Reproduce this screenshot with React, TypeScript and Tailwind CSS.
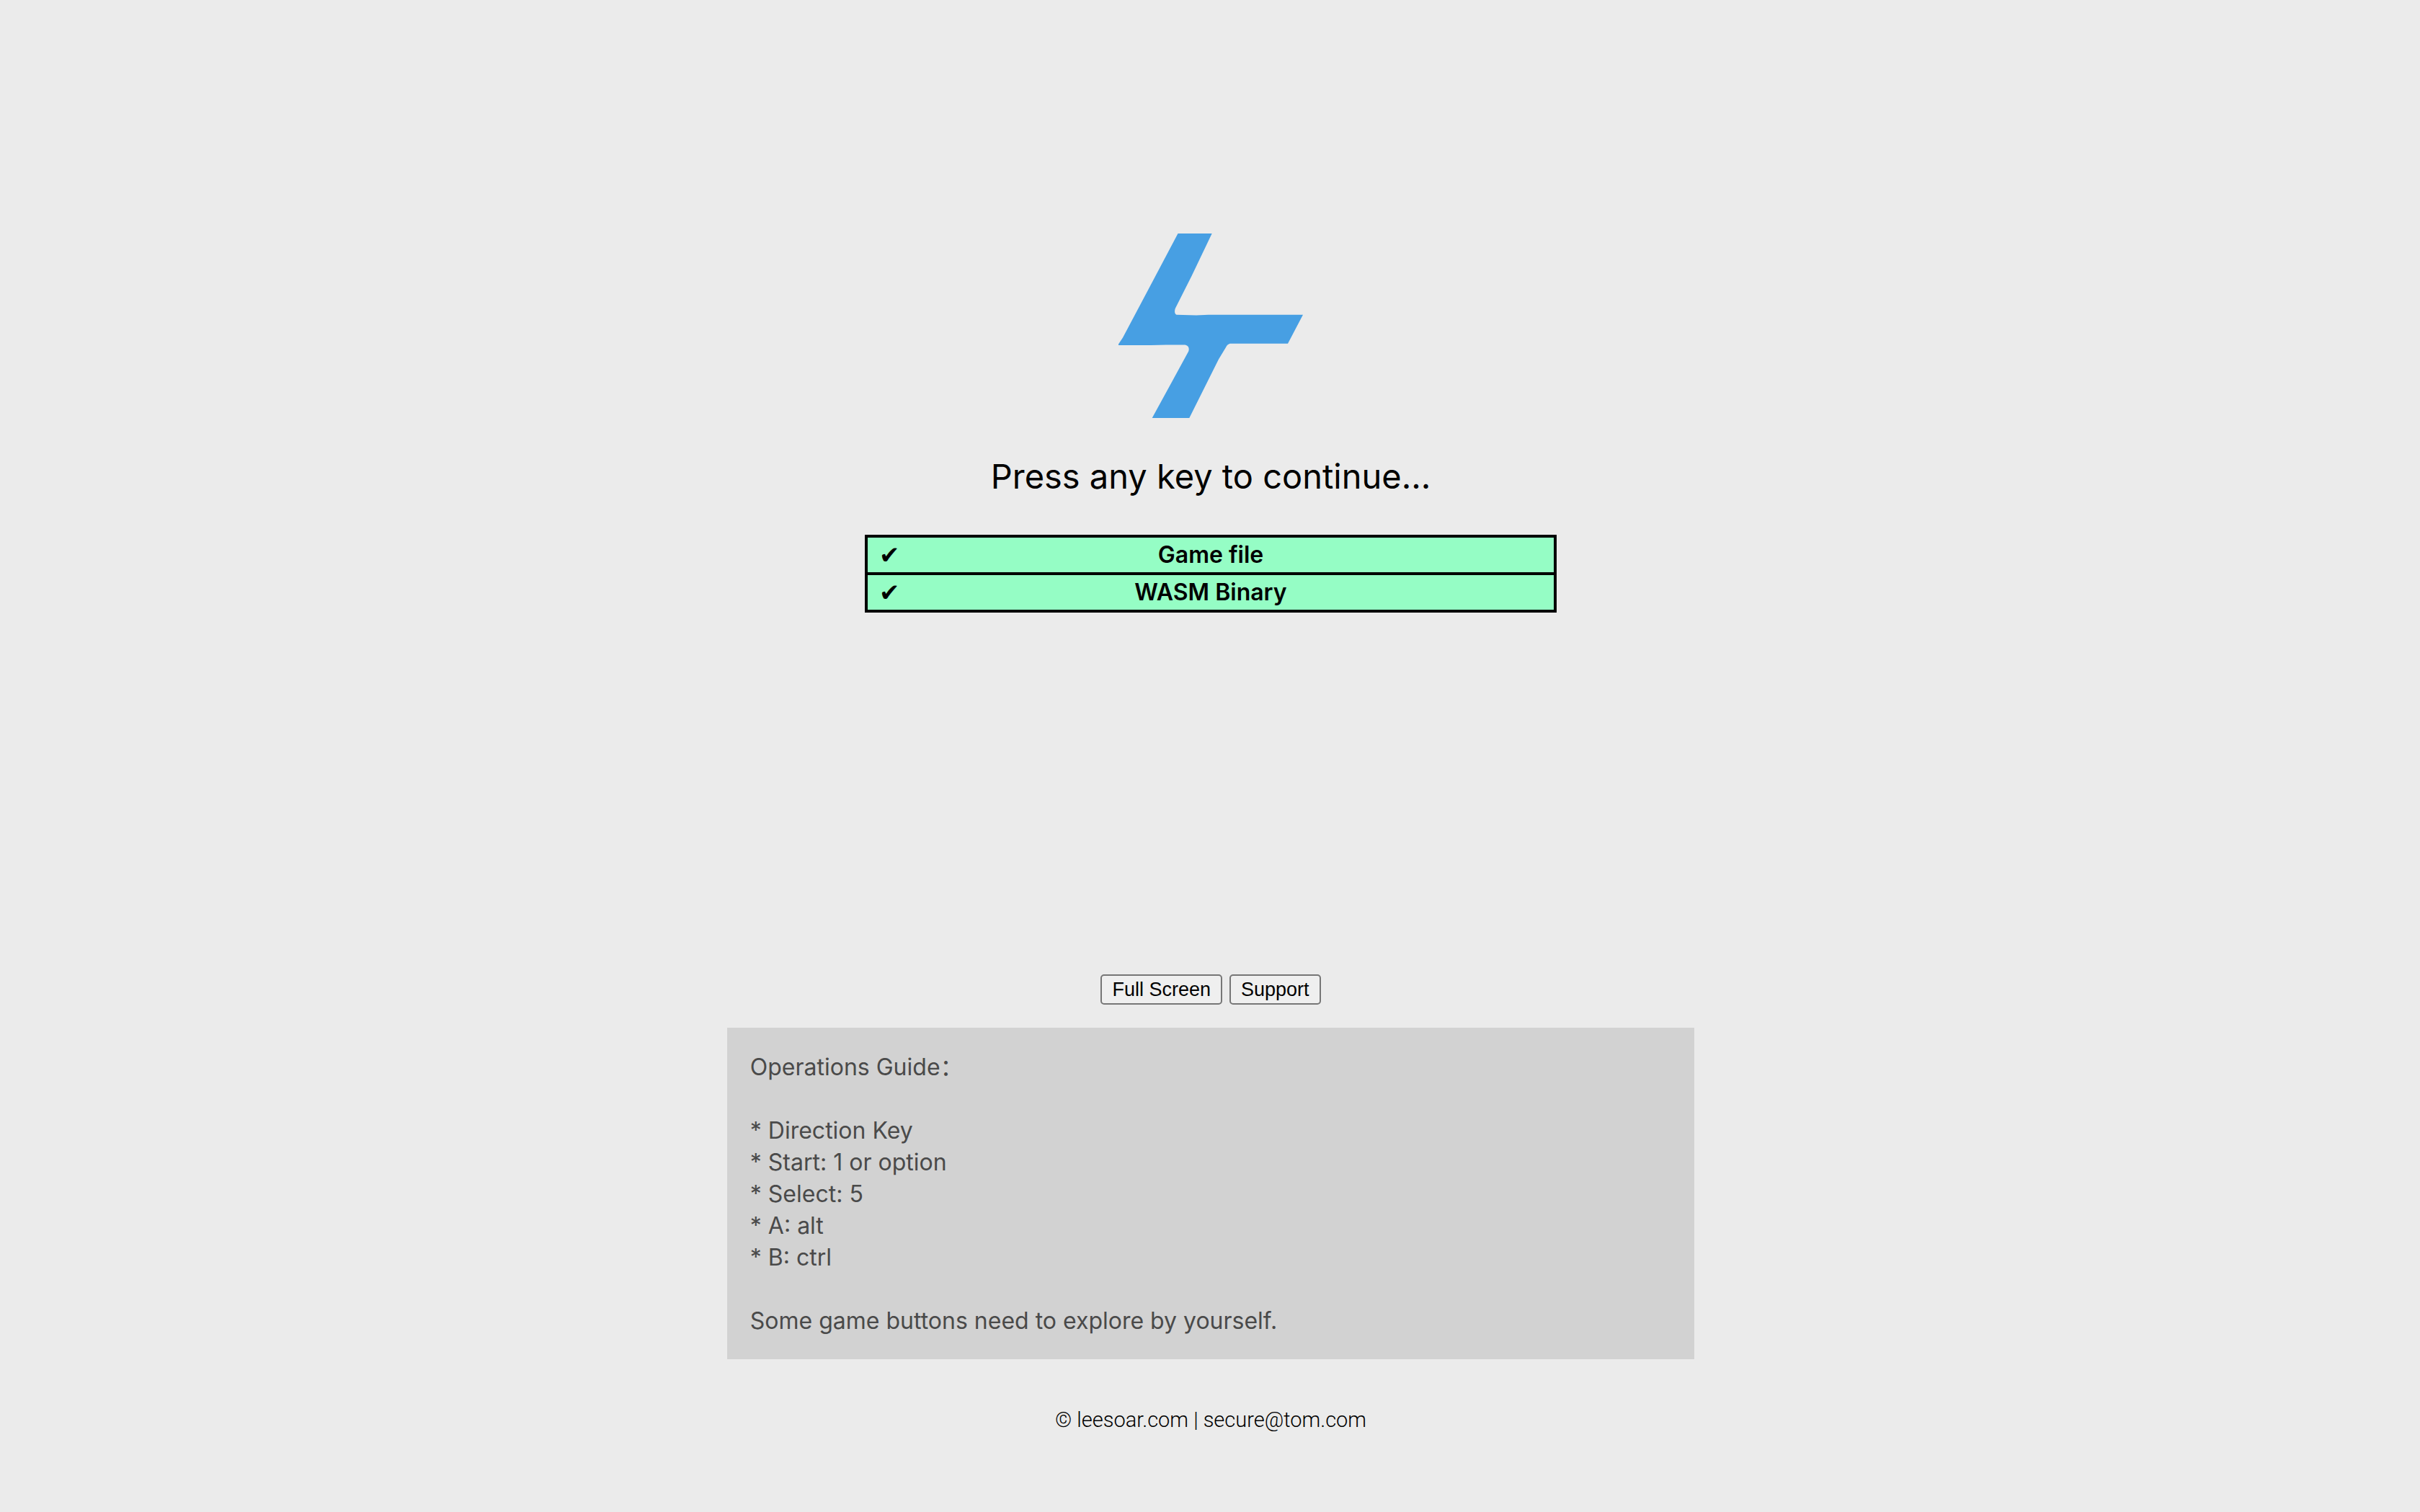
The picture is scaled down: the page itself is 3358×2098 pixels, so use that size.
const files = ["Game file", "WASM Binary"];

const keys = ["Direction Key", "Start: 1 or option", "Select: 5", "A: alt", "B: ctrl"];

function Logo() {
  return (
    <svg viewBox="0 0 256 256" className="size-64" role="img" aria-label="Logo" fill="#479fe3">
      <path d="M82.500 0H129.700L101.500 59L78.800 104C77.500 107.500 77.800 111.500 80.500 112.800L108 113.500L125 112.800H256L235 152.700H156C152.500 152.700 150.500 155 149 158L139 174.500L98.300 256H46.700L73.500 207L97.200 163.500C98.800 158.500 96.500 154.600 91 154.600H66L45 155H0V153.500L6 144.500L41 78.500Z" />
    </svg>
  );
}

function FileStatus({ name }: { name: string }) {
  return (
    <li className="grid grid-cols-[1fr_auto_1fr] px-4">
      <span className="text-[34px] font-normal">✔</span>
      <span>{name}</span>
    </li>
  );
}

function ToolButton({ label }: { label: string }) {
  return (
    <button
      type="button"
      className="rounded-[5px] border-2 border-[#767676] bg-[#efefef] px-[14px] font-['Liberation_Sans',sans-serif] text-[27px] leading-[38px]"
    >
      {label}
    </button>
  );
}

export default function App() {
  return (
    <div className="flex min-h-screen flex-col items-center bg-[#ebebeb] pl-0.5 font-[Inter,'Noto_Sans_CJK_SC',sans-serif] text-black">
      <main className="flex w-full flex-col items-center">
        <section className="flex min-h-[1320px] w-full flex-col items-center pt-[324px]">
          <Logo />
          <h1 className="my-12 text-[47px] leading-[66px]">Press any key to continue...</h1>
          <ul className="w-[960px] max-w-full divide-y-4 divide-black border-4 border-black bg-[#95fdc5] text-[32px] leading-[48px] font-semibold">
            {files.map((name) => (
              <FileStatus key={name} name={name} />
            ))}
          </ul>
        </section>
        <div className="flex gap-[10px] py-8">
          <ToolButton label="Full Screen" />
          <ToolButton label="Support" />
        </div>
        <section className="w-2/5 bg-[#d2d2d2] px-8 pt-[33px] pb-[31px] text-[32px] leading-[44px] text-[#4a4a4a]">
          <h2>Operations Guide：</h2>
          <ul className="my-11">
            {keys.map((key) => (
              <li key={key}>* {key}</li>
            ))}
          </ul>
          <p>Some game buttons need to explore by yourself.</p>
        </section>
      </main>
      <footer className="mt-16 font-[Roboto,sans-serif] text-[29px] leading-10 font-light">
        © <a href="#home">leesoar.com</a> | <a href="mailto:secure@tom.com">secure@tom.com</a>
      </footer>
    </div>
  );
}
